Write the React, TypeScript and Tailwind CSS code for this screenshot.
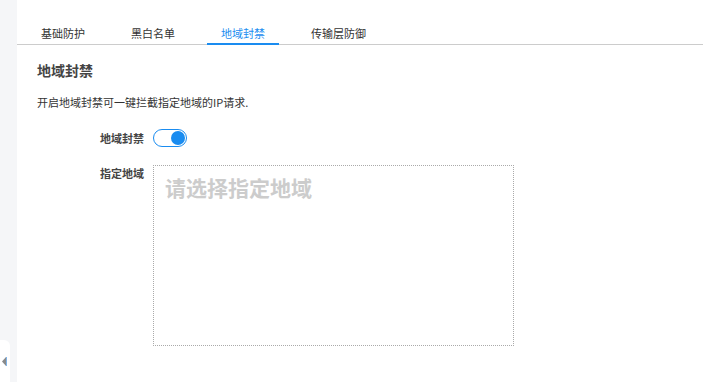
import { useState } from "react";

const TABS = ["基础防护", "黑白名单", "地域封禁", "传输层防御"];

export default function App() {
  const [active, setActive] = useState(2);
  const [enabled, setEnabled] = useState(true);

  return (
    <div
      className="flex h-[382px] w-[703px] overflow-hidden bg-white text-[#333]"
      style={{ fontFamily: '"Noto Sans CJK SC", "Noto Sans", sans-serif' }}
    >
      {/* left strip with collapse handle */}
      <aside className="flex w-[17px] shrink-0 flex-col justify-end bg-[#f5f6f8]">
        <button
          type="button"
          className="flex h-[42px] w-[10px] items-center justify-start rounded-tr-[6px] bg-white pl-[2px]"
        >
          <svg width="5" height="9" viewBox="0 0 5 9">
            <path d="M4 0 L0 4.5 L4 9 Z" fill="#8a8a8a" />
            <rect x="4" y="0" width="1" height="9" fill="#7fb2e6" />
          </svg>
        </button>
      </aside>

      <main className="flex-1">
        <nav className="flex h-[45px] border-b border-[#cccccc] pl-[10px]">
          {TABS.map((tab, index) => (
            <button
              key={tab}
              type="button"
              onClick={() => setActive(index)}
              className={`-mb-px mr-[18px] h-[45px] border-b-2 px-[14px] pt-[22px] text-[11px] leading-[14px] ${
                index === active
                  ? "border-[#1a8cf0] text-[#1a8cf0]"
                  : "border-transparent text-[#333]"
              }`}
            >
              <span className="block h-[14px]">{tab}</span>
            </button>
          ))}
        </nav>

        <section className="pl-[20px]">
          <h1 className="mt-[15px] text-[14px] font-bold leading-[20px] text-[#444]">地域封禁</h1>
          <p className="mt-[14px] text-[11px] leading-[16px] text-[#333]">
            开启地域封禁可一键拦截指定地域的IP请求.
          </p>

          <div className="mt-[19px] flex h-[18px] items-center">
            <label className="w-[107px] text-right text-[11px] font-bold leading-[16px] text-[#444]">
              地域封禁
            </label>
            <button
              type="button"
              onClick={() => setEnabled(!enabled)}
              className={`ml-[9px] flex h-[18px] w-[34px] items-center rounded-full border border-[#1a8cf0] bg-white px-[1px] ${
                enabled ? "justify-end" : "justify-start"
              }`}
            >
              <span
                className={`block h-[14px] w-[14px] rounded-full ${
                  enabled ? "bg-[#1a8cf0]" : "bg-[#ccc]"
                }`}
              />
            </button>
          </div>

          <div className="mt-[18px] flex items-start">
            <label className="w-[107px] text-right text-[11px] font-bold leading-[16px] text-[#444]">
              指定地域
            </label>
            <textarea
              placeholder="请选择指定地域"
              className="ml-[9px] h-[181px] w-[361px] resize-none border border-dotted border-[#aaaaaa] px-[11px] pt-[10px] text-[21px] font-bold leading-[22px] text-[#333] outline-none placeholder:text-[#cccccc]"
            />
          </div>
        </section>
      </main>
    </div>
  );
}
